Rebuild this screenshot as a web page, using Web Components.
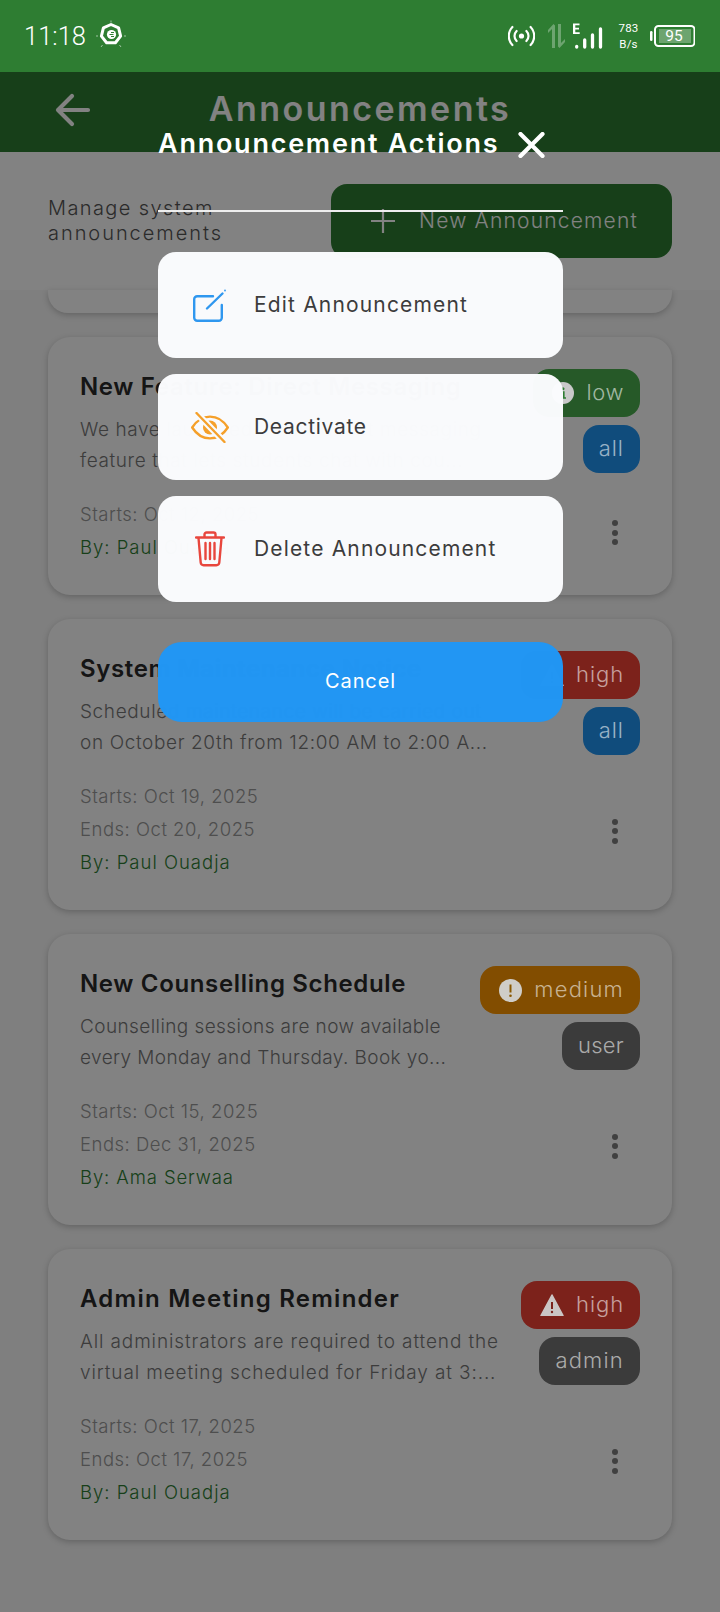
<!DOCTYPE html>
<html lang="en"><head><meta charset="utf-8"><title>Announcements</title>
<style>
html,body{margin:0;padding:0}
body{width:720px;height:1612px;overflow:hidden;position:relative;background:#f9f9f9;font-family:Inter,"Liberation Sans",sans-serif}
</style></head><body>
<status-bar></status-bar>
<app-header>Announcements</app-header>
<sub-header>Manage system<br><span style="letter-spacing:1.950px">announcements</span></sub-header>
<card-list>
  <announcement-card stub></announcement-card>

  <announcement-card style="--ts:.65px;--bs:.6px;--by:1px" priority="low" audience="all" starts="Oct 12, 2025" by="Paul Ouadja">
    <span slot="title">New Feature: Direct Messaging</span>
    <span slot="body">We have launched a new direct messaging<br>feature that lets students chat with cou...</span>
  </announcement-card>

  <announcement-card style="--ts:.65px;--bs:.62px;--by:1px" priority="high" audience="all" starts="Oct 19, 2025" ends="Oct 20, 2025" by="Paul Ouadja">
    <span slot="title">System Maintenance Notice</span>
    <span slot="body">Scheduled maintenance will be carried out<br>on October 20th from 12:00 AM to 2:00 A...</span>
  </announcement-card>

  <announcement-card style="--ts:.65px;--bs:.41px;--by:.9px" priority="medium" audience="user" starts="Oct 15, 2025" ends="Dec 31, 2025" by="Ama Serwaa">
    <span slot="title">New Counselling Schedule</span>
    <span slot="body">Counselling sessions are now available<br>every Monday and Thursday. Book yo...</span>
  </announcement-card>

  <announcement-card style="--ts:1.25px;--bs:.88px;--by:1px" priority="high" audience="admin" starts="Oct 17, 2025" ends="Oct 17, 2025" by="Paul Ouadja">
    <span slot="title">Admin Meeting Reminder</span>
    <span slot="body">All administrators are required to attend the<br>virtual meeting scheduled for Friday at 3:...</span>
  </announcement-card>
</card-list>
<dim-scrim></dim-scrim>
<action-sheet heading="Announcement Actions">
  <action-item kind="edit" style="--ls:1.170px">Edit Announcement</action-item>
  <action-item kind="off" style="--ls:.700px">Deactivate</action-item>
  <action-item kind="delete" style="--ls:1.160px">Delete Announcement</action-item>
</action-sheet>

<script>
function define(name, html, init){
  customElements.define(name, class extends HTMLElement{
    constructor(){
      super();
      const root=this.attachShadow({mode:'open'});
      root.innerHTML=typeof html==='function'?html(this):html;
      if(init)init(this,root);
    }
  });
}

define('status-bar',`<style>
:host{display:flex;align-items:center;height:72px;background:#2e7d32;color:#fff;font-family:Roboto,"Liberation Sans",sans-serif;padding:0 25px 0 24px;box-sizing:border-box}
.time{font-size:25.500px;font-weight:300;line-height:72px}
svg{display:block;flex:none}
.right{margin-left:auto;display:flex;align-items:center}
.speed{font-size:11.500px;line-height:16px;text-align:center;margin-left:14px;width:23px;letter-spacing:.2px}
.battery{margin-left:10px;position:relative;width:45px;height:22px;display:flex;align-items:center;justify-content:center}
.battery svg{position:absolute;inset:0}
.battery span{position:relative;font-size:15.500px;line-height:22px;margin-left:3px}
</style>
<span class="time">11:18</span>
<svg style="margin-left:10px" width="30" height="32" viewBox="0 0 30 32"><g stroke="#fff" fill="none"><path d="M15 4.500l7.600 3.400 2 8.200-5.200 6.600h-8.800l-5.200-6.600 2-8.200z" stroke-width="3" stroke-linejoin="round"/><g stroke-width="1" opacity=".55"><path d="M15 .5v2M28 16h2M0 16h2M5 27l1.500-2M25 27l-1.500-2"/></g></g><circle cx="15.500" cy="14.500" r="4.600" fill="#fff"/><path d="M13.500 14.500h4M15 12.500h3M15 16.500h3" stroke="#2e7d32" stroke-width="1"/></svg>
<div class="right">
<svg width="27" height="22" viewBox="0 0 27 22" fill="none" stroke="#fff" stroke-width="2.200" stroke-linecap="round"><circle cx="13.500" cy="11" r="2.600" fill="#fff" stroke="none"/><path d="M8.600 6a7 7 0 0 0 0 10M18.400 6a7 7 0 0 1 0 10M4.400 2a13 13 0 0 0 0 18M22.600 2a13 13 0 0 1 0 18"/></svg>
<svg style="margin-left:13px" width="18" height="24" viewBox="0 0 18 24" fill="#fff" opacity=".3"><path d="M4 24V5L0 9V6L5.500 0 7 1.500V24zM10 0h3v19l4-4v3l-5.500 6L10 22.500z"/></svg>
<svg style="margin-left:7px" width="30" height="27" viewBox="0 0 30 27"><path d="M0 0.500h6.500v1.800H2.300v2.400h3.700v1.800H2.300v2.700h4.400v1.800H0z" fill="#fff"/><g fill="none" stroke="#fff" stroke-width="3.300" stroke-linecap="round"><path d="M3.700 23.500v.5M11.700 17v7M19.500 12v12M27.500 6v18"/></g></svg>
<div class="speed">783<br>B/s</div>
<div class="battery"><svg width="45" height="22" viewBox="0 0 45 22"><rect x="0" y="6" width="2.500" height="10" rx="1.250" fill="#fff"/><rect x="5" y="1" width="39.500" height="20" rx="3.500" fill="none" stroke="#fff" stroke-width="2"/><rect x="9" y="4" width="32" height="14" fill="#fff" opacity=".3"/></svg><span>95</span></div>
</div>`);

define('app-header',`<style>
:host{display:grid;grid-template-columns:1fr auto 1fr;align-items:center;height:80px;background:#2e7d32;color:#fff;padding-bottom:5px;box-sizing:border-box}
svg{display:block;margin-left:55px}
.t{font-size:34px;font-weight:600;letter-spacing:2.460px;line-height:40px;margin-top:-1px}
</style>
<svg width="36" height="34" viewBox="0 0 36 34" fill="none" stroke="#fff" stroke-width="4.200" stroke-linecap="round" stroke-linejoin="round"><path d="M33 17H3M17 3 3 17l14 14"/></svg>
<div class="t"><slot></slot></div><span></span>`);

define('sub-header',`<style>
:host{display:flex;align-items:center;justify-content:space-between;padding:32px 48px;background:#fff;color:#555}
.d{font-size:20px;font-weight:300;line-height:25px;letter-spacing:1.400px}
.b{width:341px;height:74px;box-sizing:border-box;border-radius:16px;background:#2e7d32;color:#fff;display:flex;align-items:center;padding:0 0 2px 39px;font-size:21px;font-weight:300;letter-spacing:1.200px}
svg{display:block;margin:2px 23px 0 0;flex:none}
</style>
<div class="d"><slot></slot></div>
<div class="b"><svg width="26" height="26" viewBox="0 0 26 26" stroke="#fff" stroke-width="2.200"><path d="M13 1v24M1 13h24"/></svg>New Announcement</div>`);

define('card-list',`<style>
:host{display:flex;flex-direction:column;gap:24px;padding:0 48px}
</style><slot></slot>`);

const ICONS={
 low:`<svg width="22" height="22" viewBox="0 0 22 22"><circle cx="11" cy="11" r="11" fill="#c9c9c9"/><path d="M9 10h2.800v6H14M9 16h5" stroke="#2e7d32" stroke-width="1.600" fill="none"/><circle cx="11" cy="6.800" r="1.500" fill="#2e7d32"/></svg>`,
 medium:`<svg width="23" height="23" viewBox="0 0 23 23"><circle cx="11.500" cy="11.500" r="11.500" fill="#cfcdc8"/><path d="M11.500 5.500v8" stroke="#8a5800" stroke-width="2"/><circle cx="11.500" cy="16.800" r="1.300" fill="#8a5800"/></svg>`,
 high:`<svg width="24" height="22" viewBox="0 0 24 22"><path d="M12 1 23 21.500H1z" fill="#cbc6c5" stroke="#cbc6c5" stroke-width="1.500" stroke-linejoin="round"/><path d="M12 8v7" stroke="#7b231c" stroke-width="2"/><circle cx="12" cy="18" r="1.200" fill="#7b231c"/></svg>`
};
const PILLS={low:['#4caf50','.600px'],medium:['#ff9800','1.200px'],high:['#f44336','.900px'],all:['#2196f3','1px'],user:['#757575','.250px'],admin:['#757575','1.200px']};

define('pill-badge',h=>{
 const k=h.getAttribute('kind'),p=PILLS[k];
 return `<style>
:host{display:inline-flex;align-items:center;gap:12px;height:48px;box-sizing:border-box;padding:0 16px 0 ${ICONS[k]?19:16}px;border-radius:16px;background:${p[0]};font-size:22px;font-weight:300;letter-spacing:${p[1]}}
.r{position:relative;z-index:11;display:flex;align-items:center}
.l{color:rgba(255,255,255,.58);margin-top:-3px}
svg{display:block}
</style>${ICONS[k]?`<span class="r">${ICONS[k]}</span>`:''}<span class="r l">${k}</span>`;
});

define('announcement-card',h=>{
 if(h.hasAttribute('stub'))return `<style>:host{display:block;height:23px;background:#fff;border-radius:0 0 20px 20px;box-shadow:0 2px 6px rgba(0,0,0,.22)}</style>`;
 const a=n=>h.getAttribute(n);
 return `<style>
:host{display:block;box-sizing:border-box;padding:32px;background:#fff;border-radius:22px;box-shadow:0 2px 6px rgba(0,0,0,.22)}
.top{display:flex;justify-content:space-between;align-items:flex-start;height:106px}
.title{font-size:24px;font-weight:600;line-height:36px;color:#2a2a2a;letter-spacing:var(--ts);white-space:nowrap}
.body{margin-top:9px;font-size:19px;font-weight:300;line-height:31px;color:#777;letter-spacing:var(--bs);white-space:nowrap}
.pills{display:flex;flex-direction:column;align-items:flex-end;gap:8px}
.bottom{display:flex;justify-content:space-between;align-items:center;margin-top:23px}
.meta{font-size:18.500px;font-weight:300;line-height:33px;letter-spacing:.500px;color:#999;margin-bottom:-1px}
.by{color:#2e7d32;letter-spacing:var(--by)}
.dots{display:flex;flex-direction:column;gap:3.500px;margin:4px 22px 0 0}
.dots i{width:6px;height:6px;border-radius:50%;background:#7f7f7f}
</style>
<div class="top"><div><div class="title"><slot name="title"></slot></div><div class="body"><slot name="body"></slot></div></div>
<div class="pills"><pill-badge kind="${a('priority')}"></pill-badge><pill-badge kind="${a('audience')}"></pill-badge></div></div>
<div class="bottom"><div class="meta"><div>Starts: ${a('starts')}</div>${a('ends')?`<div>Ends: ${a('ends')}</div>`:''}<div class="by">By: ${a('by')}</div></div>
<div class="dots"><i></i><i></i><i></i></div></div>`;
});

define('dim-scrim',`<style>
:host{position:absolute;left:0;right:0;top:72px;bottom:0;z-index:10;background:rgba(0,0,0,.49)}
</style>`);

const ACTION={
 edit:`<svg width="34" height="34" viewBox="0 0 34 34" fill="none" stroke="#2f97ef" stroke-width="2.400" stroke-linecap="round" stroke-linejoin="round"><path d="M20 8.200H4.200a3 3 0 0 0-3 3v18.600a3 3 0 0 0 3 3h21.600a3 3 0 0 0 3-3V17"/><path d="M14 20.500 29.500 5.500"/><circle cx="32" cy="2.500" r=".9" fill="#2f97ef" stroke="none"/></svg>`,
 off:`<svg width="38" height="31" viewBox="0 0 38 31" fill="none"><path d="M1.200 15.500C6 8 12 4.600 19 4.600S32 8 36.800 15.500C32 23 26 26.400 19 26.400S6 23 1.200 15.500Z" stroke="#f5a02a" stroke-width="2.400" stroke-linejoin="round"/><circle cx="19" cy="15.500" r="7" fill="#f5a02a"/><path d="M5.500 1 33.500 30" stroke="#f9fbfd" stroke-width="6.500"/><path d="M5.500 1 33.500 30" stroke="#f5a02a" stroke-width="2.400" stroke-linecap="round"/></svg>`,
 delete:`<svg width="30" height="36" viewBox="0 0 30 36" fill="none" stroke="#e8463d" stroke-width="2.400" stroke-linecap="round" stroke-linejoin="round"><path d="M1 6.500h28M9.500 6V3.500a2 2 0 0 1 2-2h7a2 2 0 0 1 2 2V6M3.500 7l2.200 24.500a3 3 0 0 0 3 2.700h12.600a3 3 0 0 0 3-2.700L26.500 7M10.500 12v16M15 12v16M19.500 12v16"/></svg>`
};

define('action-item',h=>`<style>
:host{display:flex;align-items:center;height:106px;border-radius:18px;background:rgba(251,252,254,.985);color:#3c3c3c;font-size:21px;letter-spacing:var(--ls);font-weight:400}
.i{width:44px;margin-left:30px;margin-right:22px;display:flex;justify-content:center;flex:none}
svg{display:block}
.t{margin-top:-2px}
</style><span class="i">${ACTION[h.getAttribute('kind')]}</span><span class="t"><slot></slot></span>`);

define('action-sheet',h=>`<style>
:host{position:absolute;z-index:20;top:126px;left:158px;width:405px;display:flex;flex-direction:column;color:#fff}
.head{display:flex;align-items:center;height:36px}
.h{font-size:27px;font-weight:600;letter-spacing:1.750px;line-height:36px;white-space:nowrap}
.x{margin-left:19px;display:block;margin-top:1px}
.line{height:2px;background:#eee;margin:47.500px 0 40.500px}
.list{display:flex;flex-direction:column;gap:16px}
.cancel{margin-top:40px;height:80px;box-sizing:border-box;padding-bottom:2px;border-radius:24px;background:rgba(33,150,243,.995);display:flex;align-items:center;justify-content:center;font-size:20px;letter-spacing:.900px}
</style>
<div class="head"><span class="h">${h.getAttribute('heading')}</span><svg class="x" width="27" height="26" viewBox="0 0 27 26" stroke="#fff" stroke-width="4.200" stroke-linecap="round"><path d="M2.500 2 24.500 24M24.500 2 2.500 24"/></svg></div>
<div class="line"></div>
<div class="list"><slot></slot></div>
<div class="cancel">Cancel</div>`);
</script>
</body></html>
